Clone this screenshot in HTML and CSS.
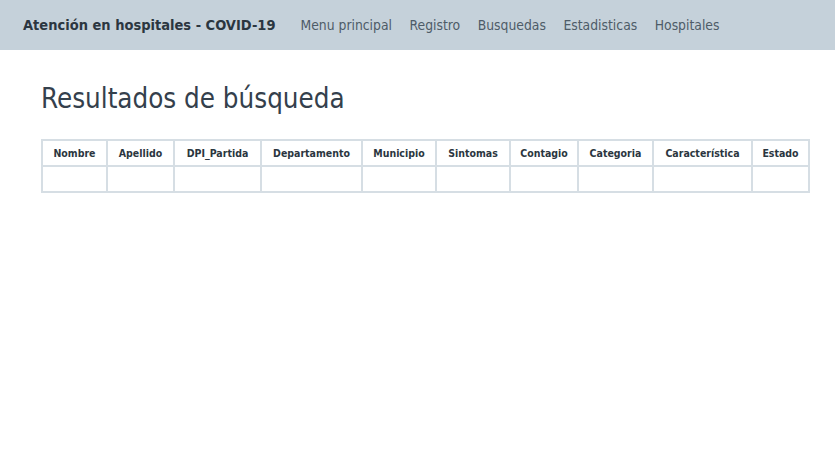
FILE: index.html
```html
<!DOCTYPE html>
<html lang="es">
<head>
<meta charset="utf-8">
<title>Resultados de búsqueda</title>
<link rel="stylesheet" href="styles.css">
</head>
<body>
<header class="navbar">
  <span class="brand">Atención en hospitales - COVID-19</span>
  <nav class="nav">
    <a class="nav-link" href="#">Menu principal</a>
    <a class="nav-link" href="#">Registro</a>
    <a class="nav-link" href="#">Busquedas</a>
    <a class="nav-link" href="#">Estadisticas</a>
    <a class="nav-link" href="#">Hospitales</a>
  </nav>
</header>
<main class="content">
  <h1 class="title">Resultados de búsqueda</h1>
  <table class="results">
    <colgroup>
      <col class="c1"><col class="c2"><col class="c3"><col class="c4"><col class="c5">
      <col class="c6"><col class="c7"><col class="c8"><col class="c9"><col class="c10">
    </colgroup>
    <thead>
      <tr>
        <th>Nombre</th><th>Apellido</th><th>DPI_Partida</th><th>Departamento</th><th>Municipio</th>
        <th>Sintomas</th><th>Contagio</th><th>Categoria</th><th>Característica</th><th>Estado</th>
      </tr>
    </thead>
    <tbody>
      <tr><td></td><td></td><td></td><td></td><td></td><td></td><td></td><td></td><td></td><td></td></tr>
    </tbody>
  </table>
</main>
</body>
</html>
```
FILE: styles.css
```css
html, body {
  margin: 0;
  padding: 0;
  background: #ffffff;
  font-family: "DejaVu Sans Condensed", "DejaVu Sans", sans-serif;
  color: #2c3e50;
}
.navbar {
  height: 50px;
  background: #c5d1da;
  display: flex;
  align-items: center;
  padding-left: 23px;
  box-sizing: border-box;
}
.brand {
  font-weight: bold;
  font-size: 14.5px;
  color: #2b3640;
  margin-right: 25px;
}
.nav {
  display: flex;
  gap: 17.5px;
}
.nav-link {
  font-size: 13.8px;
  color: #4e5c68;
  text-decoration: none;
}
.content {
  padding: 0 41px;
}
.title {
  margin: 0;
  padding-top: 32px;
  font-size: 27.5px;
  font-weight: normal;
  color: #34404c;
  line-height: 32px;
}
.results {
  margin-top: 25px;
  border-collapse: collapse;
  table-layout: fixed;
  width: 767px;
  border: 2px solid #d6dee4;
}
.results th, .results td {
  border: 2px solid #d6dee4;
  height: 24px;
  padding: 0;
  text-align: center;
}
.results th {
  font-size: 10.5px;
  font-weight: bold;
  color: #2b3640;
}
.c1 { width: 65px; }
.c2 { width: 67px; }
.c3 { width: 87px; }
.c4 { width: 101px; }
.c5 { width: 74px; }
.c6 { width: 74px; }
.c7 { width: 68px; }
.c8 { width: 75px; }
.c9 { width: 99px; }
.c10 { width: 57px; }
```
